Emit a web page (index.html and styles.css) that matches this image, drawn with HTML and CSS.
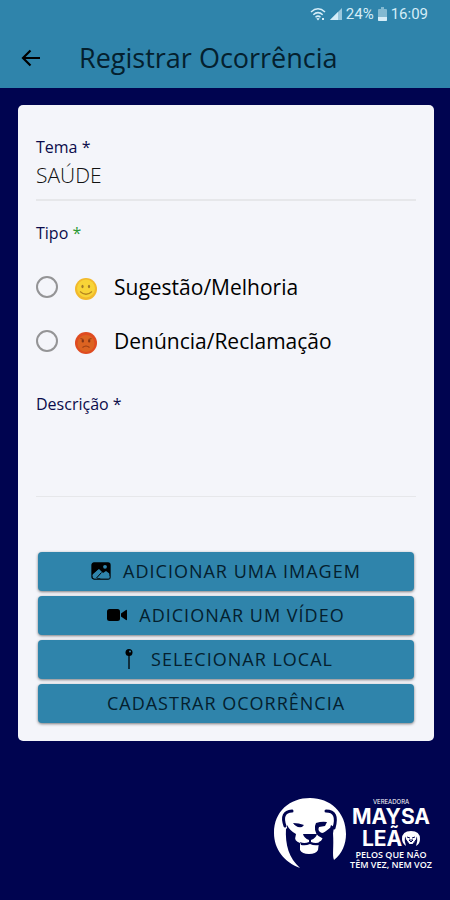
FILE: index.html
```html
<!DOCTYPE html>
<html lang="pt-BR">
<head>
<meta charset="utf-8">
<meta name="viewport" content="width=device-width, initial-scale=1">
<title>Registrar Ocorrência</title>
<link rel="stylesheet" href="styles.css">
</head>
<body>
<header class="header">
  <div class="status">
    <svg class="status-wifi" viewBox="0 0 16 14" aria-hidden="true"><g fill="none" stroke="currentColor" stroke-width="1.5"><path d="M1 5Q8-1.500 15 5"/><path d="M3.300 7.700Q8 3.500 12.700 7.700"/><path d="M5.500 10.200Q8 8 10.500 10.200"/></g><path d="M6.300 11.500Q8 10.300 9.700 11.500L8 13.500zM12 11h2v2h-2z" fill="currentColor"/></svg>
    <svg class="status-signal" viewBox="0 0 12 12" aria-hidden="true"><path d="M0 12 12 0V12z" fill="currentColor" opacity=".65"/><path d="M0 12 8 4V12z" fill="currentColor"/></svg>
    <span>24%</span>
    <svg class="status-battery" viewBox="0 0 9 14" aria-hidden="true"><path d="M3 0h3v2h2q1 0 1 1v10q0 1-1 1H1q-1 0-1-1V3q0-1 1-1h2z" fill="currentColor" opacity=".5"/><path d="M0 10h9v3q0 1-1 1H1q-1 0-1-1z" fill="currentColor"/></svg>
    <span>16:09</span>
  </div>
  <div class="toolbar">
    <button class="back" type="button" aria-label="Voltar">
      <svg viewBox="0 0 20 18" aria-hidden="true"><path d="M9.500 1.500 2 9l7.500 7.500M2.200 9H19" fill="none" stroke="currentColor" stroke-width="2.200"/></svg>
    </button>
    <h1 class="title">Registrar Ocorrência</h1>
  </div>
</header>

<main class="main">
  <form class="card">
    <div class="field">
      <label class="label" for="tema">Tema *</label>
      <input class="input" id="tema" type="text" value="SAÚDE">
    </div>

    <fieldset class="types">
      <legend class="label">Tipo <span class="required">*</span></legend>
      <label class="option">
        <input class="radio" type="radio" name="tipo" value="sugestao">
        <svg class="face" viewBox="0 0 22 22" aria-hidden="true"><circle cx="11" cy="11" r="11" fill="#f2b92c"/><circle cx="11" cy="10.500" r="9" fill="#f8d437"/><ellipse cx="7.500" cy="8.500" rx="1.100" ry="1.800" fill="#a07a28"/><ellipse cx="14" cy="8.500" rx="1.100" ry="1.800" fill="#a07a28"/><path d="M5 13.500Q11 19 17 13.500" fill="none" stroke="#b5851f" stroke-width="1.200"/></svg>
        <span>Sugestão/Melhoria</span>
      </label>
      <label class="option">
        <input class="radio" type="radio" name="tipo" value="denuncia">
        <svg class="face" viewBox="0 0 22 22" aria-hidden="true"><circle cx="11" cy="11" r="11" fill="#df4b20"/><circle cx="11" cy="11.500" r="8.500" fill="#dc6321"/><path d="m5.500 6.500 3 1M16.500 6.500l-3 1M7.500 15.500Q11 12.500 14.500 15.500" fill="none" stroke="#9a3d14" stroke-width="1.200"/><ellipse cx="7.800" cy="9" rx="1.200" ry="1.600" fill="#843414"/><ellipse cx="14.200" cy="9" rx="1.200" ry="1.600" fill="#843414"/></svg>
        <span>Denúncia/Reclamação</span>
      </label>
    </fieldset>

    <div class="field">
      <label class="label" for="descricao">Descrição *</label>
      <textarea class="input textarea" id="descricao"></textarea>
    </div>

    <div class="actions">
      <button class="action" type="button">
        <svg class="icon" viewBox="0 0 20 18" aria-hidden="true"><rect x="1" y="1" width="18" height="16" rx="2" fill="none" stroke="currentColor" stroke-width="1.300"/><path d="M1 2q0-1 1-1h16q1 0 1 1v10l-4-3-3 2-4-4-7 6z" fill="currentColor"/><circle cx="14" cy="4.800" r="1.900" fill="#2f84ab"/><path d="m1.500 13 6-5.500L11 11l-5 5.500H3zM9 16.500l6-5.500 3.500 3v2.500z" fill="#2f84ab"/><path d="m5.500 16 5-5.500" stroke="currentColor" stroke-width="1"/></svg>
        <span>ADICIONAR UMA IMAGEM</span>
      </button>
      <button class="action" type="button">
        <svg class="icon" viewBox="0 0 20 18" aria-hidden="true"><rect y="3" width="13" height="12" rx="2.500" fill="currentColor"/><path d="m14 7.500 5-3.500q1-.500 1 .500v9q0 1-1 .500l-5-3.500z" fill="currentColor"/></svg>
        <span>ADICIONAR UM VÍDEO</span>
      </button>
      <button class="action" type="button">
        <svg class="icon" viewBox="0 0 20 20" aria-hidden="true"><circle cx="10" cy="3.500" r="3.500" fill="currentColor"/><circle cx="11" cy="2.500" r="1" fill="#2f84ab"/><path d="M10 6v14" stroke="currentColor" stroke-width="1.300"/></svg>
        <span>SELECIONAR LOCAL</span>
      </button>
      <button class="action" type="submit"><span>CADASTRAR OCORRÊNCIA</span></button>
    </div>
  </form>
</main>

<footer class="footer">
  <svg class="lion" viewBox="0 0 72 72" aria-hidden="true">
    <path d="M26 70C10 64 0 51 0 35 0 13 16 0 36 0s36 14 36 36c0 10-4 20-12 26-2-5 0-12-1-27l-3-5-8 6q2 6-3 8l-1 8q-2 4-9 4t-9-4v-7q-6-2-5-7-5-3-9-8c-1 17 3 30 14 40z" fill="#fff"/>
    <path d="M11 28Q6 14 18 13M60 30Q65 13 52 13" fill="none" stroke="#000450" stroke-width="3" stroke-linecap="round"/>
    <path d="M13 27q3 6 9 9l-1 5-8-5zM42 25q6-2 11-1l-2 4-6 1q-2 4 3 6 8-1 9-8l3 2-2 13-10-2q-8-3-7-12zM19 25q6 0 11 2l-2 2q-6 1-9-4z" fill="#000450"/>
    <path d="M29 36h14q-1 4-6 6v2q5 2 9 0l-1 3q-5 1-9-1-4 2-9 1l-1-3q4 2 9 0v-2q-5-2-6-6z" fill="#000450"/>
  </svg>
  <div class="brand">
    <span class="brand-role">VEREADORA</span>
    <strong class="brand-name">MAYSA</strong>
    <strong class="brand-name brand-last">LEÃ<svg class="brand-o" viewBox="0 0 18 16" role="img" aria-label="O"><path d="M4 15Q0 12 0 8 0 0 9 0t9 8q0 5-4 7 2-5 1-9-6-4-12 0-1 4 1 9z" fill="#fff"/><path d="M3 4q6-4 12 0-1 7-4 9H7Q4 10 3 4z" fill="#fff"/><path d="m5 6 3 1M13 6l-3 1M7 9h4l-2 2zM4 9l3 4M14 9l-3 4" fill="none" stroke="#000450"/></svg></strong>
    <span class="brand-line">PELOS QUE NÃO</span>
    <span class="brand-line">TÊM VEZ, NEM VOZ</span>
  </div>
</footer>
</body>
</html>
```
FILE: styles.css
```css
* { box-sizing: border-box; }

body {
  margin: 0;
  min-height: 100vh;
  display: flex;
  flex-direction: column;
  background: #000450;
  color: #000;
  font-family: "Open Sans", "Noto Sans", sans-serif;
}

button, input, textarea { font: inherit; color: inherit; }

.header { background: #2f84ab; }

.status {
  height: 28px;
  padding: 0 22px;
  display: flex;
  align-items: center;
  justify-content: flex-end;
  gap: 4px;
  color: #d5edf8;
  font: 15px/28px Roboto, sans-serif;
}
.status-wifi { width: 16px; height: 14px; }
.status-signal { width: 12px; height: 12px; }
.status-battery { width: 9px; height: 14px; }

.toolbar {
  height: 60px;
  padding: 0 20px;
  display: flex;
  align-items: center;
  gap: 37px;
}
.back {
  width: 22px;
  height: 24px;
  padding: 0;
  border: 0;
  background: none;
  display: grid;
  place-items: center;
}
.back svg { width: 20px; height: 18px; }
.title {
  margin: 0;
  font-size: 27px;
  line-height: 36px;
  font-weight: 400;
  color: #04202e;
}

.main { padding: 17px 16px 0 18px; }

.card {
  padding: 30px 18px 18px;
  border-radius: 5px;
  background: #f4f5fa;
}

.field { display: flex; flex-direction: column; }

.label {
  padding: 0;
  font-size: 16px;
  line-height: 24px;
  font-weight: 500;
  color: #0b0b4b;
}
.required { color: #2c9a35; }

.input {
  width: 100%;
  height: 42px;
  padding: 0 0 8px;
  border: 0;
  border-bottom: 2px solid #e6e7ea;
  border-radius: 0;
  background: none;
  outline: 0;
  font-size: 21px;
  font-weight: 300;
  color: #111;
}
.textarea {
  height: 81px;
  resize: none;
  border-bottom-width: 1px;
}

.types {
  min-width: 0;
  margin: 20px 0 24px;
  padding: 0;
  border: 0;
}
.types .label { margin-bottom: 15px; }

.option {
  height: 54px;
  display: flex;
  align-items: center;
  font-size: 21px;
  line-height: 28px;
  font-weight: 500;
}
.radio {
  appearance: none;
  width: 22px;
  height: 22px;
  margin: 0;
  border: 2px solid #949496;
  border-radius: 50%;
}
.radio:checked { background: #2f84ab; }
.face { width: 22px; height: 22px; margin: 4px 17px 0; }

.actions {
  display: grid;
  gap: 5px;
  margin: 55px 2px 0;
}
.action {
  height: 39px;
  padding: 0 0 1px;
  border: 0;
  border-radius: 4px;
  background: #2f84ab;
  box-shadow: 0 1px 3px rgba(0, 0, 0, .5);
  display: flex;
  align-items: center;
  justify-content: center;
  gap: 12px;
  font-size: 18px;
  color: #04202e;
  letter-spacing: 1px;
}
.icon { width: 20px; height: 20px; color: #000; }

.footer {
  margin-top: auto;
  padding: 0 18px 30px;
  display: flex;
  align-items: center;
  justify-content: flex-end;
  gap: 4px;
  color: #fff;
}
.lion { width: 72px; height: 72px; }
.brand {
  display: flex;
  flex-direction: column;
  align-items: center;
  font-family: Inter, sans-serif;
}
.brand-role { font-size: 6px; line-height: 8px; }
.brand-name { font-size: 21px; line-height: 22px; font-weight: 700; }
.brand-last { display: flex; align-items: center; }
.brand-o { width: 18px; height: 16px; }
.brand-line { font-size: 9px; line-height: 10px; font-family: "Open Sans", sans-serif; font-weight: 600; }
```
